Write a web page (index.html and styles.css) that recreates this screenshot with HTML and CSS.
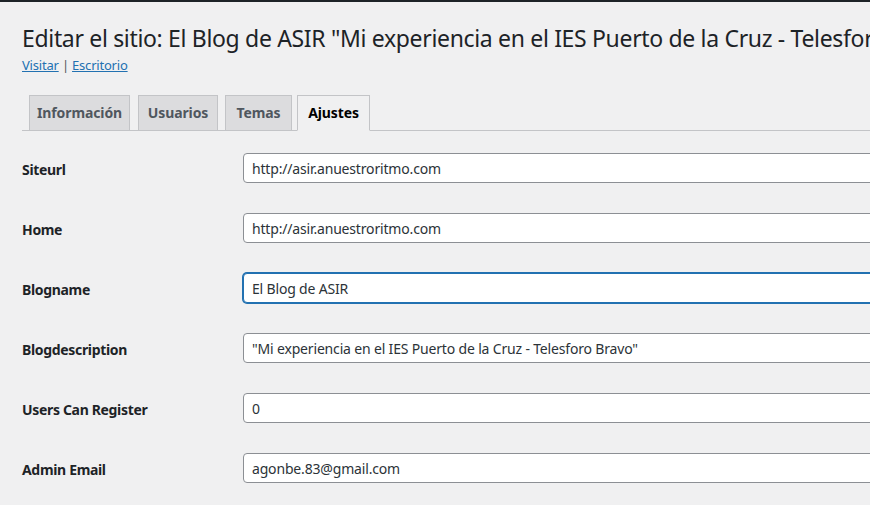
FILE: index.html
```html
<!DOCTYPE html>
<html lang="es">
<head>
<meta charset="utf-8">
<title>Editar el sitio</title>
<link rel="stylesheet" href="styles.css">
</head>
<body>
<div class="adminbar"></div>
<div class="wrap">
  <h1 class="title">Editar el sitio: El Blog de ASIR "Mi experiencia en el IES Puerto de la Cruz - Telesforo Bravo"</h1>
  <p class="links"><a href="#">Visitar</a> | <a href="#">Escritorio</a></p>
  <nav class="tabs">
    <a class="tab t1" href="#">Información</a>
    <a class="tab t2" href="#">Usuarios</a>
    <a class="tab t3" href="#">Temas</a>
    <a class="tab t4 active" href="#">Ajustes</a>
  </nav>
  <div class="form">
    <div class="row"><label class="label">Siteurl</label><input class="field" type="text" value="http://asir.anuestroritmo.com"></div>
    <div class="row"><label class="label">Home</label><input class="field" type="text" value="http://asir.anuestroritmo.com"></div>
    <div class="row"><label class="label">Blogname</label><input class="field focus" type="text" value="El Blog de ASIR"></div>
    <div class="row"><label class="label">Blogdescription</label><input class="field" type="text" value="&quot;Mi experiencia en el IES Puerto de la Cruz - Telesforo Bravo&quot;"></div>
    <div class="row"><label class="label">Users Can Register</label><input class="field" type="text" value="0"></div>
    <div class="row"><label class="label">Admin Email</label><input class="field" type="text" value="agonbe.83@gmail.com"></div>
  </div>
</div>
</body>
</html>
```
FILE: styles.css
```css
html, body {
  margin: 0;
  padding: 0;
  background: #f0f0f1;
  overflow: hidden;
  width: 870px;
  height: 505px;
}
body {
  font-family: "Noto Sans", "Open Sans", sans-serif;
  color: #1d2327;
}
.adminbar {
  height: 2px;
  background: #1d2327;
}
.wrap {
  padding: 0 0 0 22px;
}
.title {
  margin: 20px 0 0 0;
  font-size: 23px;
  letter-spacing: -0.33px;
  font-weight: 400;
  line-height: 32px;
  white-space: nowrap;
  color: #1d2327;
}
.links {
  margin: 2px 0 0 0;
  font-size: 13px;
  letter-spacing: -0.2px;
  line-height: 18px;
  color: #50575e;
}
.links a {
  color: #2271b1;
  text-decoration: underline;
}
.tabs {
  display: flex;
  margin-top: 21px;
  padding-left: 7px;
  border-bottom: 1px solid #c3c4c7;
  height: 35px;
  align-items: flex-end;
}
.tab {
  display: block;
  box-sizing: border-box;
  height: 36px;
  margin-bottom: -1px;
  padding: 5px 0;
  text-align: center;
  font-size: 14px;
  letter-spacing: -0.1px;
  line-height: 24px;
  font-weight: 700;
  color: #50575e;
  background: #dcdcde;
  border: 1px solid #c3c4c7;
  text-decoration: none;
  margin-right: 8px;
}
.t1 { width: 101px; }
.t2 { width: 80px; margin-right: 7px; }
.t3 { width: 67px; margin-right: 5px; }
.t4 { width: 73px; }
.tab.active {
  background: #f0f0f1;
  color: #000;
  border-bottom-color: #f0f0f1;
}
.form {
  display: flex;
  flex-direction: column;
  margin-top: 7px;
}
.row {
  display: flex;
  align-items: center;
  height: 60px;
}
.label {
  width: 221px;
  flex: none;
  padding-top: 2px;
  font-size: 14px;
  letter-spacing: -0.33px;
  font-weight: 700;
  color: #1d2327;
}
.field {
  flex: none;
  box-sizing: border-box;
  width: 700px;
  height: 30px;
  padding: 0 8px;
  font-family: inherit;
  font-size: 14px;
  letter-spacing: -0.17px;
  color: #2c3338;
  background: #fff;
  border: 1px solid #8c8f94;
  border-radius: 4px;
  outline: none;
}
.field.focus {
  border-color: #2271b1;
  box-shadow: 0 0 0 1px #2271b1;
}
```
